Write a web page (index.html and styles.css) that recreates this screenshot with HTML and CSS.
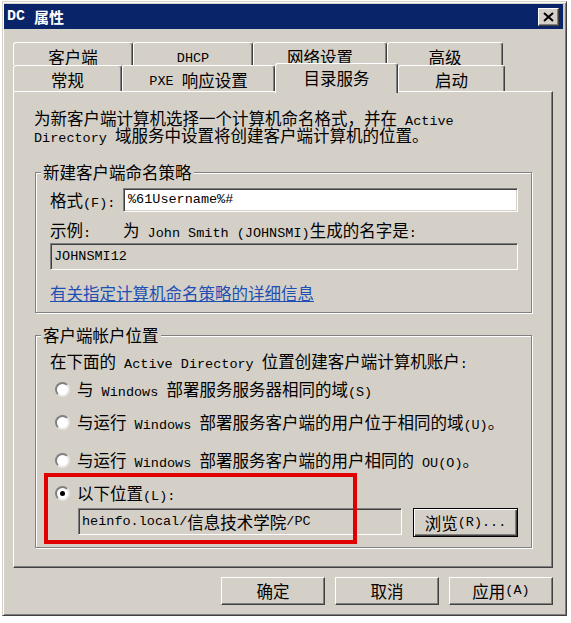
FILE: index.html
```html
<!DOCTYPE html>
<html lang="zh-CN">
<head>
<meta charset="utf-8">
<title>DC 属性</title>
<link rel="stylesheet" href="styles.css">
</head>
<body>
<div class="window">
  <div class="titlebar">
    <span class="title"><span class="en tb">DC</span><span class="tc">属性</span></span>
    <span class="close"><svg width="11" height="10" viewBox="0 0 11 10"><path d="M1 1 L10 9 M10 1 L1 9" stroke="#000" stroke-width="2" fill="none"/></svg></span>
  </div>
  <div class="content">
    <div class="tabs">
      <div class="tabrow back">
        <div class="tab t1">客户端</div>
        <div class="tab t2"><span class="en up">DHCP</span></div>
        <div class="tab t3">网络设置</div>
        <div class="tab t4">高级</div>
      </div>
      <div class="tabrow front">
        <div class="tab t5">常规</div>
        <div class="tab t6"><span class="en up">PXE </span>响应设置</div>
        <div class="tab t7 active">目录服务</div>
        <div class="tab t8">启动</div>
      </div>
    </div>
    <div class="panel">
      <div class="intro">为新客户端计算机选择一个计算机命名格式，并在<span class="en"> Active</span><br><span class="en">Directory </span>域服务中设置将创建客户端计算机的位置。</div>
      <fieldset class="group g1">
        <legend>新建客户端命名策略</legend>
        <div class="field-row">
          <span class="lbl">格式<span class="en">(F):</span></span>
          <span class="input"><span class="en">%61Username%#</span></span>
        </div>
        <div class="example">
          <span class="lbl">示例<span class="en">:</span></span>
          <span>为<span class="en"> John Smith (JOHNSMI)</span>生成的名字是<span class="en">:</span></span>
        </div>
        <div class="readonly"><span class="en">JOHNSMI12</span></div>
        <div class="link">有关指定计算机命名策略的详细信息</div>
      </fieldset>
      <fieldset class="group g2">
        <legend>客户端帐户位置</legend>
        <div class="line">在下面的<span class="en"> Active Directory </span>位置创建客户端计算机账户<span class="en">:</span></div>
        <div class="radio-row r1"><span class="radio"></span><span>与<span class="en"> Windows </span>部署服务服务器相同的域<span class="en">(S)</span></span></div>
        <div class="radio-row r2"><span class="radio"></span><span>与运行<span class="en"> Windows </span>部署服务客户端的用户位于相同的域<span class="en">(U)</span>。</span></div>
        <div class="radio-row r3"><span class="radio"></span><span>与运行<span class="en"> Windows </span>部署服务客户端的用户相同的<span class="en"> OU(O)</span>。</span></div>
        <div class="chosen">
          <div class="radio-row r4"><span class="radio checked"></span><span>以下位置<span class="en">(L):</span></span></div>
          <div class="loc-row">
            <span class="loc"><span class="en">heinfo.local/</span>信息技术学院<span class="en">/PC</span></span>
            <span class="btn browse">浏览<span class="en">(R)...</span></span>
          </div>
          <div class="mark"></div>
        </div>
      </fieldset>
    </div>
    <div class="buttons">
      <span class="btn">确定</span>
      <span class="btn">取消</span>
      <span class="btn">应用<span class="en">(A)</span></span>
    </div>
  </div>
</div>
</body>
</html>
```

FILE: styles.css
```css
* { box-sizing: border-box; }

body {
  margin: 0;
  background: #fff;
  font-family: "Noto Sans CJK SC", sans-serif;
  font-size: 16.5px;
  color: #000;
}

.en {
  font-family: "Liberation Mono", monospace;
  font-size: 13.5px;
  line-height: 0;
}

.en.up {
  vertical-align: 2px;
}

.window {
  margin: 1px 0 0 2px;
  width: 565px;
  height: 615px;
  background: #d4d0c8;
  border: 1px solid;
  border-color: #d4d0c8 #404040 #404040 #d4d0c8;
  box-shadow: inset 1px 1px #fff, inset -1px -1px #808080;
  padding: 2px 3px 0 1px;
}

.titlebar {
  height: 25px;
  background: #0a246a;
  color: #fff;
  display: flex;
  align-items: center;
  justify-content: space-between;
  padding: 0 4px 0 3px;
}

.title {
  display: flex;
  align-items: center;
  gap: 9px;
  font-weight: bold;
  line-height: 25px;
}

.tb { font-size: 15px; font-weight: bold; line-height: 25px; }
.tc { font-size: 15px; }

.close {
  width: 21px;
  height: 18px;
  background: #d4d0c8;
  border: 1px solid;
  border-color: #fff #404040 #404040 #fff;
  box-shadow: inset -1px -1px #808080;
  display: flex;
  align-items: center;
  justify-content: center;
}

.content {
  padding: 13px 10px 0 9px;
}

.tabs {
  height: 49px;
  display: flex;
  flex-direction: column;
}

.tabrow {
  display: flex;
  align-items: flex-end;
}

.back { height: 23px; }
.front { height: 26px; }

.tab {
  height: 100%;
  background: #d4d0c8;
  border: 1px solid;
  border-bottom: 0;
  border-color: #fff #404040 #fff #fff;
  box-shadow: inset -1px 0 #808080;
  border-radius: 3px 3px 0 0;
  text-align: center;
  line-height: 20px;
  padding-top: 4px;
  white-space: nowrap;
}

.t1 { width: 120px; }
.t2 { width: 120px; }
.t3 { width: 134px; }
.t4 { width: 116px; }
.t5 { width: 109px; }
.t6 { width: 153px; }
.t7 { width: 123px; }
.t8 { width: 107px; }

.tab.active {
  height: 30px;
  margin-bottom: -2px;
  position: relative;
  z-index: 1;
}

.panel {
  height: 477px;
  border: 1px solid;
  border-color: #fff #404040 #404040 #fff;
  box-shadow: inset -1px -1px #808080;
  padding: 18px 20px 0 20px;
}

.intro {
  line-height: 17px;
  white-space: nowrap;
}

.group {
  margin: 0 0 0 1px;
  padding: 6px 13px 9px 14px;
  border: 1px solid #808080;
  box-shadow: 1px 1px 0 #fff, inset 1px 1px 0 #fff;
  min-width: 0;
}

.g1 { margin-top: 18px; }
.g2 { margin-top: 12px; padding-bottom: 10px; }

.group legend {
  padding: 0 2px;
  margin-left: -9px;
  line-height: 20px;
  background: #d4d0c8;
}

.field-row {
  display: flex;
  align-items: center;
  height: 24px;
}

.lbl {
  width: 73px;
  flex: none;
  line-height: 20px;
}

.input {
  flex: 1;
  height: 24px;
  background: #fff;
  border: 1px solid;
  border-color: #808080 #fff #fff #808080;
  box-shadow: inset 1px 1px #404040, inset -1px -1px #d4d0c8;
  padding-left: 4px;
  display: flex;
  align-items: center;
}

.example {
  margin-top: 8px;
  line-height: 20px;
  display: flex;
  white-space: nowrap;
}

.readonly {
  margin-top: 3px;
  height: 27px;
  background: #d4d0c8;
  border: 1px solid;
  border-color: #808080 #fff #fff #808080;
  box-shadow: inset 1px 1px #404040, inset -1px -1px #d4d0c8;
  padding-left: 3px;
  display: flex;
  align-items: center;
}

.link {
  margin-top: 13px;
  line-height: 20px;
  color: #1e4fb4;
  text-decoration: underline;
}

.line {
  line-height: 20px;
  white-space: nowrap;
}

.radio-row {
  display: flex;
  align-items: center;
  height: 20px;
  line-height: 20px;
  white-space: nowrap;
}

.r1 { margin-top: 8px; }
.r2 { margin-top: 13px; }
.r3 { margin-top: 18px; }
.r4 { margin-top: 0; }

.radio {
  width: 15px;
  height: 15px;
  flex: none;
  margin: 0 7px 0 5px;
  border-radius: 50%;
  background: #fff;
  border: 2px solid;
  border-color: #808080 #e8e6e2 #e8e6e2 #808080;
  display: flex;
  align-items: center;
  justify-content: center;
}

.radio.checked::after {
  content: "";
  width: 5px;
  height: 5px;
  border-radius: 50%;
  background: #000;
}

.chosen {
  position: relative;
  margin-top: 13px;
}

.loc-row {
  display: flex;
  align-items: flex-start;
  margin-top: 5px;
  padding-left: 28px;
}

.loc {
  width: 324px;
  height: 27px;
  background: #d4d0c8;
  border: 1px solid;
  border-color: #808080 #fff #fff #808080;
  box-shadow: inset 1px 1px #404040, inset -1px -1px #d4d0c8;
  padding-left: 3px;
  display: flex;
  align-items: center;
  white-space: nowrap;
}

.btn {
  width: 104px;
  height: 28px;
  background: #d4d0c8;
  border: 1px solid;
  border-color: #fff #404040 #404040 #fff;
  box-shadow: inset -1px -1px #808080;
  display: flex;
  align-items: center;
  justify-content: center;
  white-space: nowrap;
}

.btn.browse {
  width: 105px;
  height: 29px;
  margin-left: 11px;
  border-color: #000;
  box-shadow: inset 1px 1px #fff, inset -1px -1px #404040, inset -2px -2px #808080;
}

.mark {
  position: absolute;
  left: -6px;
  top: -10px;
  width: 313px;
  height: 71px;
  border: 4px solid #e00000;
  pointer-events: none;
}

.buttons {
  display: flex;
  justify-content: flex-end;
  gap: 10px;
  margin-top: 9px;
}
```
